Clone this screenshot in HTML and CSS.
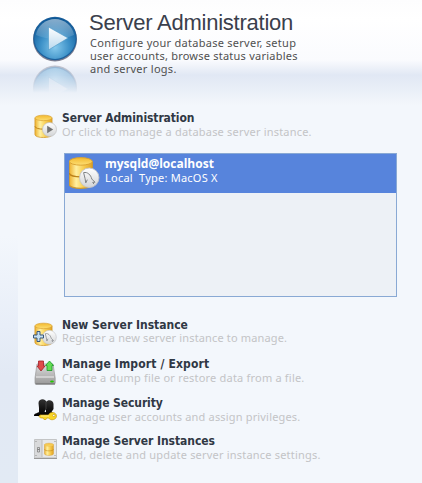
FILE: index.html
```html
<!DOCTYPE html>
<html lang="en">
<head>
<meta charset="utf-8">
<title>Server Administration</title>
<link rel="stylesheet" href="styles.css">
</head>
<body>
<svg class="defs" width="0" height="0" aria-hidden="true">
  <defs>
    <linearGradient id="gold"><stop offset="0" stop-color="#eeb02c"/><stop offset=".3" stop-color="#fff0a0"/><stop offset=".6" stop-color="#f9cf55"/><stop offset="1" stop-color="#e0a222"/></linearGradient>
    <linearGradient id="lid" x2="0" y2="1"><stop offset="0" stop-color="#f3b92e"/><stop offset="1" stop-color="#fddf74"/></linearGradient>
    <linearGradient id="silver" x2="0" y2="1"><stop offset="0" stop-color="#fff"/><stop offset="1" stop-color="#d2d4d6"/></linearGradient>
    <linearGradient id="metal" x2="0" y2="1"><stop offset="0" stop-color="#dedede"/><stop offset="1" stop-color="#9a9a9a"/></linearGradient>
    <linearGradient id="dark" x2="0" y2="1"><stop offset="0" stop-color="#333"/><stop offset=".5" stop-color="#161616"/><stop offset="1" stop-color="#000"/></linearGradient>
    <radialGradient id="orb" cy=".72" r=".7"><stop offset="0" stop-color="#86c9ec"/><stop offset=".5" stop-color="#3d91c8"/><stop offset="1" stop-color="#0c5796"/></radialGradient>
    <linearGradient id="gloss" x2="0" y2="1"><stop offset="0" stop-color="#fff" stop-opacity=".5"/><stop offset="1" stop-color="#fff" stop-opacity=".08"/></linearGradient>
    <linearGradient id="arrow" x2="0" y2="1"><stop offset="0" stop-color="#fff"/><stop offset="1" stop-color="#b9d9ee"/></linearGradient>
    <linearGradient id="fade" x2="0" y2="1"><stop offset="0" stop-color="#fff" stop-opacity=".45"/><stop offset="1" stop-color="#fff" stop-opacity="0"/></linearGradient>
    <mask id="reflect" maskUnits="userSpaceOnUse" x="0" y="48" width="50" height="30"><rect y="49" width="50" height="28" fill="url(#fade)"/></mask>
    <g id="ball">
      <circle cx="23" cy="23.5" r="22" fill="#7d7f91"/>
      <circle cx="23" cy="22.5" r="21.7" fill="#1c609c"/>
      <circle cx="23" cy="22.3" r="20.6" fill="url(#orb)"/>
      <path d="M4 19a19.3 19.3 0 0 1 38 0Q23 27 4 19Z" fill="url(#gloss)"/>
      <path d="M16.500 11v23L36 22Z" fill="url(#arrow)" stroke="#4c97c6" stroke-width=".6"/>
    </g>
    <g id="db">
      <path d="M1 4v17c0 4 18 4 18 0V4" fill="url(#gold)" stroke="#d19a2c" stroke-width=".8"/>
      <ellipse cx="10" cy="4" rx="9" ry="2.800" fill="url(#lid)" stroke="#d8a030" stroke-width=".7"/>
      <path d="M1 12.500c0 4 18 4 18 0" fill="none" stroke="#bc8218"/>
    </g>
    <g id="dolphin">
      <circle cx="8" cy="8" r="7.6" fill="url(#silver)" stroke="#c4c5c8" stroke-width=".7"/>
      <path d="M5.300 12 4.700 8.500 3.600 4c3-.8 5.600 1.800 6.400 5l2.500 2.500-1.800.1 1 1.400M5.300 12l1.200-2.500" fill="none" stroke="#7b7e81" stroke-width=".75"/>
    </g>
  </defs>
</svg>
<header class="banner">
  <svg class="logo" width="46" height="77" viewBox="0 0 46 77"><use href="#ball"/><g mask="url(#reflect)"><use href="#ball" transform="translate(0 95) scale(1 -1)"/></g></svg>
  <div class="intro">
    <h1>Server Administration</h1>
    <p><span class="l1">Configure your database server, setup</span><br><span class="l2">user accounts, browse status variables</span><br><span class="l3">and server logs.</span></p>
  </div>
</header>
<div class="body">
  <aside class="rail"></aside>
  <main>
    <section class="action">
      <svg width="24" height="26" viewBox="0 0 24 26"><use href="#db" transform="translate(1 1) scale(.95 .98)"/><circle cx="16.500" cy="16.500" r="7" fill="url(#silver)" stroke="#c0c0c0" stroke-width=".7"/><path d="M14.200 12.700v7.600l6-3.800Z" fill="#737373"/></svg>
      <div><h2 class="t1">Server Administration</h2><p class="d1">Or click to manage a database server instance.</p></div>
    </section>
    <div class="instances">
      <div class="instance">
        <svg width="32" height="33" viewBox="0 0 32 33"><use href="#db" transform="translate(-1 -1) scale(1.280 1.350)"/><use href="#dolphin" transform="translate(10 10.500) scale(1.280)"/></svg>
        <div><strong>mysqld@localhost</strong><span>Local&nbsp; Type: MacOS X</span></div>
      </div>
    </div>
    <section class="action a2">
      <svg width="24" height="26" viewBox="0 0 24 26"><use href="#db" transform="translate(1 1) scale(.95 .98)"/><use href="#dolphin" transform="translate(9 9) scale(.92)"/><path d="M4 10.500h3v3.500h3.500v3H7v3.500H4v-3.500H.5v-3H4Z" fill="#c4dff2" stroke="#3a5778"/></svg>
      <div><h2 class="t2">New Server Instance</h2><p class="d2">Register a new server instance to manage.</p></div>
    </section>
    <section class="action a3">
      <svg width="24" height="26" viewBox="0 0 24 26"><path d="M4 4h16l2.200 14v5q0 1-1 1H3q-1 0-1-1v-5Z" fill="url(#metal)" stroke="#999" stroke-width=".7"/><path d="M3 17h18" stroke="#eee"/><path d="M2.500 24h19.500" stroke="#686868"/><path d="M5.500 1h5v5h1.500L8 11 4 6h1.500Z" fill="#df4b4b" stroke="#a21e2a" stroke-width=".8"/><path d="m16.500 1 4 4.500H19v5h-5v-5h-1.500Z" fill="#65dc55" stroke="#149923" stroke-width=".8"/><ellipse cx="19" cy="21.500" rx="1.900" ry="1.100" fill="#22c900"/></svg>
      <div><h2 class="t3">Manage Import / Export</h2><p class="d3">Create a dump file or restore data from a file.</p></div>
    </section>
    <section class="action a4">
      <svg width="24" height="26" viewBox="0 0 24 26"><g fill="url(#dark)"><path d="M13 3c2-3 7.500-2 7.500 2v5l-2 3 3.500 2v2h-9Z"/><path d="M5.500 4c0-5 8-5 8 0v5.500l-2 3 4 2V17H1c0-3 3-2.500 5-4V9Z"/></g><path d="M13 3v7" stroke="#666" stroke-width=".5"/><path d="M7 16h8.500c1.500-4 8-3 8 1s-6 5-8 2H14l-1 1.500h-2l-1-1.500H7.500L6 17.500Z" fill="#f8d525" stroke="#c99d1c" stroke-width=".7"/><path d="M8 17h8" stroke="#fff08a"/><circle cx="20.800" cy="16.500" r="1.100" fill="#fff" stroke="#b98b0b" stroke-width=".5"/></svg>
      <div><h2 class="t4">Manage Security</h2><p class="d4">Manage user accounts and assign privileges.</p></div>
    </section>
    <section class="action a5">
      <svg width="24" height="26" viewBox="0 0 24 26"><path d="M1.500 2.500h22v18.500h-22Z" fill="#d9dadb" stroke="#c3c5c6"/><path d="M9 3h14v17H9Z" fill="#e6e7e8"/><path d="M9 3v17" stroke="#bbb"/><path d="M1 21.500h23" stroke="#999"/><path d="M4.500 10.500h2v2h-2Zm0 2h2V15h-2Z" fill="none" stroke="#777" stroke-width=".7"/><g fill="#888"><circle cx="3" cy="4.500" r=".6"/><circle cx="3" cy="18.500" r=".6"/><circle cx="22" cy="4.500" r=".6"/><circle cx="22" cy="18.500" r=".6"/></g><use href="#db" transform="translate(11 5.500) scale(.5 .54)"/></svg>
      <div><h2 class="t5">Manage Server Instances</h2><p class="d5">Add, delete and update server instance settings.</p></div>
    </section>
  </main>
</div>
</body>
</html>
```
FILE: styles.css
```css
* { box-sizing: border-box; }
body { margin: 0; width: 422px; height: 483px; overflow: hidden; display: flex; flex-direction: column; background: #f3f7fc; font-family: "Noto Sans", sans-serif; }
.defs { position: absolute; }
h1, h2, p { margin: 0; white-space: nowrap; }
.banner { height: 106px; flex: none; display: flex; padding: 16px 0 0 32px; gap: 11px; background: linear-gradient(#fdfdfe 0, #fff 20px, #fafbfe 60px, #e1e8f4 75px, #e8eef7 88px, #f0f4fa 100px, #f3f7fc); }
.logo { flex: none; }
.intro { padding-top: 7px; margin-top: -11px; }
h1 { font: 22px/22px "Liberation Sans", sans-serif; letter-spacing: -.24px; color: #3b404c; }
.intro p { font-size: 11px; line-height: 13px; margin-top: 2px; padding-left: 1px; color: #505050; }
.l1, .l3 { letter-spacing: .27px; }
.l2 { letter-spacing: .23px; }
.body { display: flex; flex: 1; }
.rail { width: 18px; flex: none; background: linear-gradient(#f3f7fc 130px, #e8eef8 220px, #e2e9f4 270px, #e2eaf4); }
main { flex: 1; padding-left: 15px; }
.action { height: 39px; display: flex; gap: 5px; }
.action svg { flex: none; margin-top: 8px; }
main > .action:first-child { height: 47px; }
main > .action:first-child svg { margin-top: 7px; }
.action > div { padding-top: 4px; }
h2 { font: bold 12px/16px "DejaVu Sans Condensed", "DejaVu Sans", sans-serif; color: #303844; }
.action p { font-size: 11px; line-height: 13px; margin-top: -1px; letter-spacing: .2px; color: #c3c4c6; }
.t1, .t4 { letter-spacing: -.1px; }
.t3 { letter-spacing: .14px; }
.t5 { letter-spacing: -.05px; }
.action .d2 { margin-top: -2px; letter-spacing: .15px; }
.action .d4 { letter-spacing: .17px; }
.a4 { height: 38px; }
.instances { width: 333px; height: 144px; margin: 0 0 16px 31px; border: 1px solid #89a9d4; background: #edf1f6; }
.instance { height: 39px; display: flex; gap: 4px; padding: 3px 0 0 4px; background: #5784dc; color: #fff; }
.instance div { display: flex; flex-direction: column; align-items: flex-start; font-size: 11px; line-height: 14px; white-space: nowrap; }
.instance strong { font-family: "Open Sans", sans-serif; font-size: 12px; }
.instance span { letter-spacing: .23px; }
```
